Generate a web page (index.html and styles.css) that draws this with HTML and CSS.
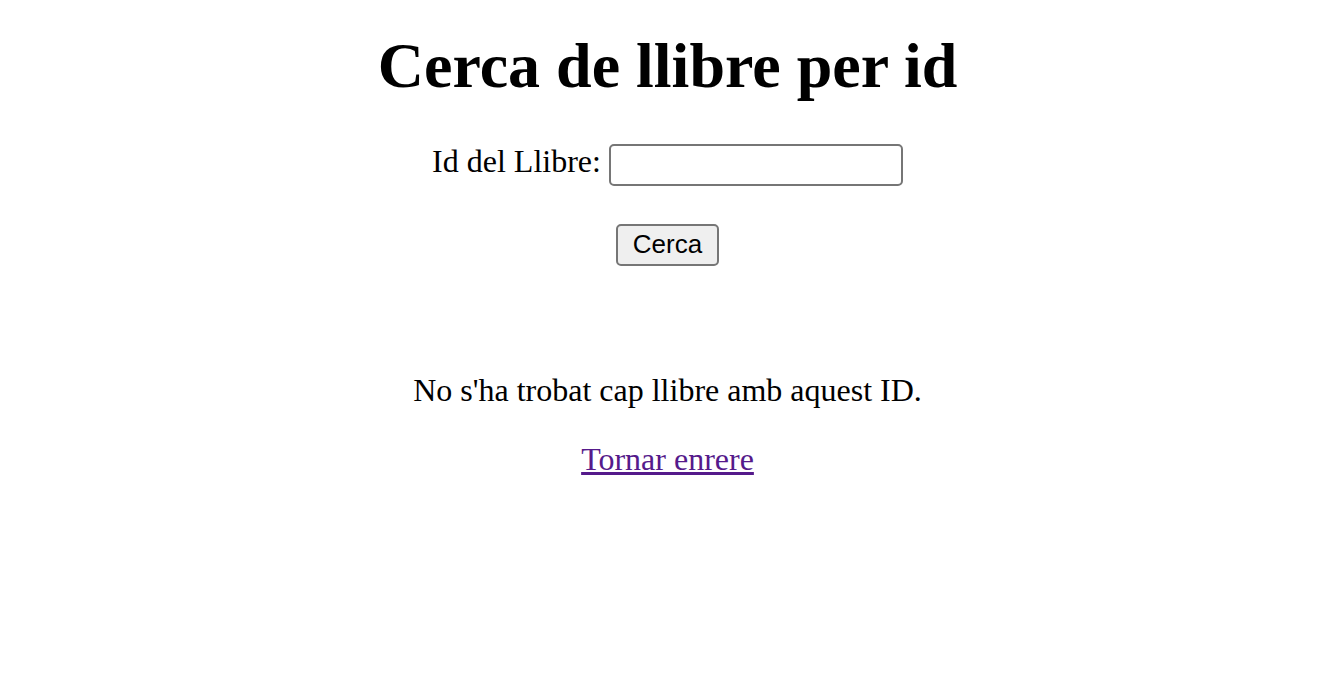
FILE: index.html
```html
<!DOCTYPE html>
<html lang="ca">
<head>
<meta charset="utf-8">
<title>Cerca de llibre per id</title>
<link rel="stylesheet" href="styles.css">
</head>
<body>
<main class="page">
  <h1 class="title">Cerca de llibre per id</h1>
  <form class="search">
    <p class="row">
      <label for="id" class="label">Id del Llibre:</label>
      <input type="text" id="id" class="field">
    </p>
    <p class="row row-btn">
      <button type="button" class="btn">Cerca</button>
    </p>
  </form>
  <div class="result">
    <p class="msg">No s'ha trobat cap llibre amb aquest ID.</p>
    <p class="msg"><a href="#" class="back">Tornar enrere</a></p>
  </div>
</main>
</body>
</html>
```

FILE: styles.css
```css
html, body {
  margin: 0;
  padding: 0;
  background: #fff;
}
.page {
  font-family: "Liberation Serif", "Times New Roman", serif;
  font-size: 32px;
  color: #000;
  text-align: center;
  padding-top: 7px;
  padding-left: 13px;
}
.title {
  font-size: 64px;
  font-weight: bold;
  margin: 22px 0 0;
  line-height: 74px;
}
.search {
  margin: 0;
}
.row {
  margin: 40px 0 0;
}
.row-btn {
  margin-top: 38px;
}
.label {
  font-size: 32px;
}
.field {
  width: 294px;
  height: 42px;
  box-sizing: border-box;
  border: 2px solid #767676;
  border-radius: 5px;
  vertical-align: middle;
  font-size: 26px;
  padding: 0 4px;
  background: #fff;
}
.btn {
  font-family: "Liberation Sans", Arial, sans-serif;
  font-size: 26px;
  width: 103px;
  height: 42px;
  box-sizing: border-box;
  border: 2px solid #767676;
  border-radius: 5px;
  background: #efefef;
  color: #000;
  padding: 0;
}
.result {
  margin-top: 106px;
}
.msg {
  margin: 32px 0 0;
}
.back {
  color: #551a8b;
}
```
